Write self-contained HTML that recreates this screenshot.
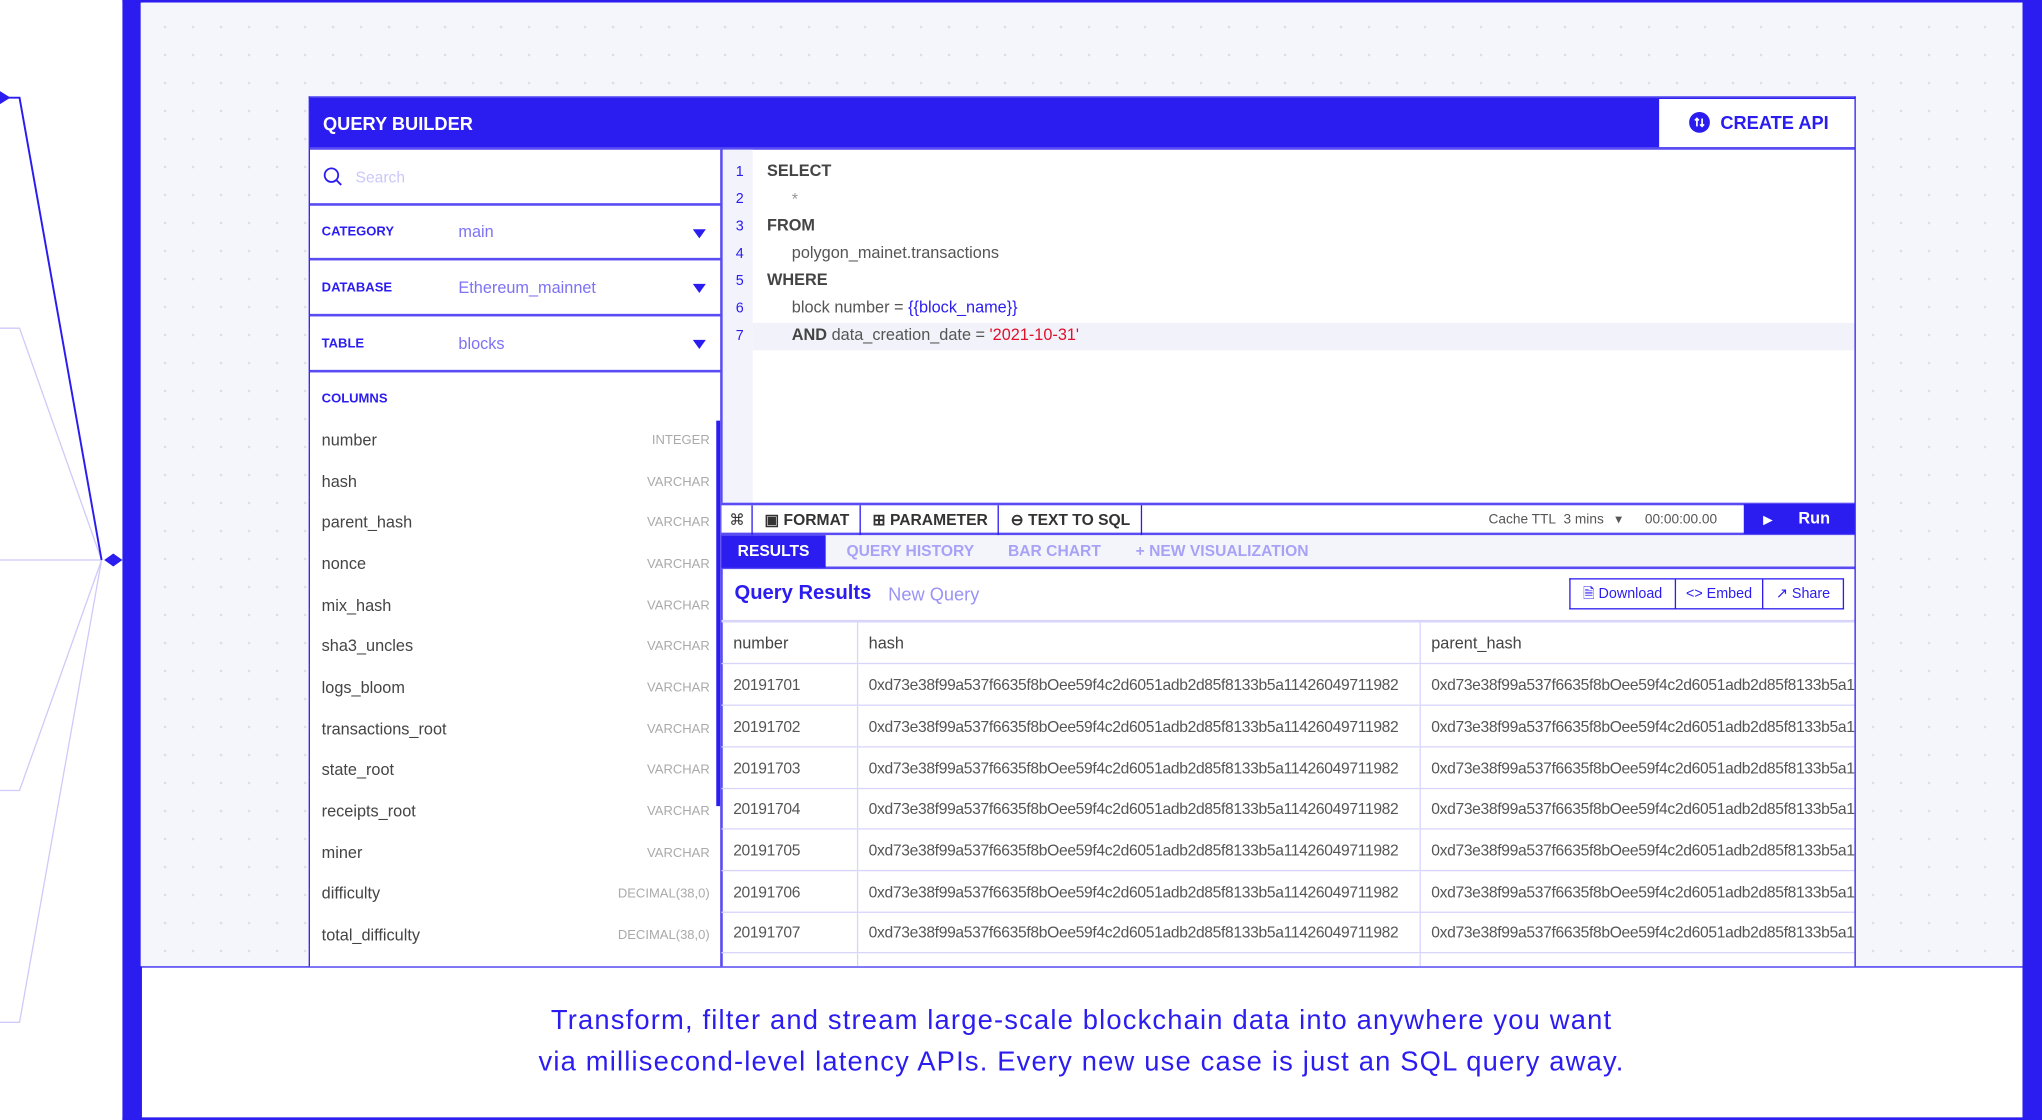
<!DOCTYPE html>
<html><head><meta charset="utf-8"><style>
*{margin:0;padding:0;box-sizing:border-box}
html,body{width:2042px;height:1120px;overflow:hidden;background:#fff;font-family:"Liberation Sans",sans-serif}
#w{position:absolute;left:0;top:0;width:1568px;height:860px;transform:scale(1.30230);transform-origin:0 0}
.a{position:absolute}
.B{color:#2b1cf0}
.bg{position:absolute;left:108px;top:2px;width:1445px;height:740px;background-color:#f5f6fb;background-image:radial-gradient(circle,#dcdde8 0.8px,transparent 1.2px);background-size:21.5px 21.5px;background-position:8px 8px}
.panel{position:absolute;left:237px;top:74px;width:1188px;height:668px;background:#fff;border:1px solid #2b1cf0;border-bottom:none;overflow:hidden}
.row{position:absolute;left:0;width:316px;border-bottom:2px solid #5a4cf3}
.lab{position:absolute;left:9px;font-size:10px;font-weight:bold;color:#2b1cf0}
.val{position:absolute;left:114px;font-size:12.5px;color:#7d72f5}
.tri{position:absolute;left:294px;width:0;height:0;border-left:5.5px solid transparent;border-right:5.5px solid transparent;border-top:7px solid #2b1cf0}
.col{position:absolute;left:9px;width:298px;font-size:12.5px;color:#444}
.col span{position:absolute;right:0;font-size:10px;color:#aaa;top:2px}
.ln{position:absolute;left:324px;width:12px;text-align:center;font-size:11px;color:#2b1cf0}
.cd{position:absolute;left:351px;font-size:12.5px;color:#555}
.tb{position:absolute;top:0;height:23px;border-right:1px solid #2b1cf0;font-size:12px;font-weight:bold;color:#333;line-height:22px;padding-left:9px}
.tab{position:absolute;top:0;height:25px;line-height:25px;font-size:12px;font-weight:bold;color:#a8a2f7}
.btn{position:absolute;top:0;height:23px;border-right:1px solid #2b1cf0;font-size:11px;color:#2b1cf0;line-height:22px;text-align:center}
.tr{position:absolute;left:316px;width:872px;height:32px;border-bottom:1px solid #d8d5fb;font-size:12px;letter-spacing:-0.25px;color:#555;overflow:hidden}
.tr div{position:absolute;top:9px;white-space:nowrap}
.vl{position:absolute;top:0;width:1px;height:32px;background:#d8d5fb}
</style></head><body><div id="w">
<svg class="a" style="left:0;top:0" width="100" height="860">
<g fill="none" stroke="#cfcaf9" stroke-width="1">
<polyline points="0,252 15,252 78,430"/><polyline points="0,430 78,430"/><polyline points="0,607 15,607 78,430"/><polyline points="0,785 15,785 78,430"/>
</g>
<polyline points="0,75 15,75 78,430" fill="none" stroke="#2b1cf0" stroke-width="1.5"/>
<polygon points="0,70 8,75 0,80" fill="#2b1cf0"/>
<polygon points="87,425 94,430 87,435 80,430" fill="#2b1cf0"/>
</svg>
<div class="a" style="left:94px;top:0;width:15px;height:860px;background:#2b1cf0"></div>
<div class="a" style="left:1553px;top:0;width:15px;height:860px;background:#2b1cf0"></div>
<div class="a" style="left:94px;top:0;width:1474px;height:2px;background:#2b1cf0"></div>
<div class="bg"></div>
<div class="a" style="left:108px;top:742px;width:1445px;height:1px;background:#2b1cf0"></div>
<div class="a" style="left:94px;top:858px;width:1474px;height:2px;background:#2b1cf0"></div>
<div class="a B" style="left:108px;top:768px;width:1445px;text-align:center;font-size:21px;letter-spacing:0.9px;line-height:32px">Transform, filter and stream large-scale blockchain data into anywhere you want<br>via millisecond-level latency APIs. Every new use case is just an SQL query away.</div>

<div class="panel">
<div class="a" style="left:0;top:0;width:1188px;height:39px;background:#2b1cf0"></div>
<div class="a" style="left:10px;top:12px;font-size:14px;font-weight:bold;color:#fff">QUERY BUILDER</div>
<div class="a" style="left:1036px;top:1px;width:151px;height:37px;background:#fff"></div>
<svg class="a" style="left:1059px;top:11px" width="16" height="16"><circle cx="8" cy="8" r="8" fill="#2b1cf0"/><path d="M6 11V5M4.5 6.5L6 5 7.5 6.5M10 5v6M8.5 9.5L10 11l1.5-1.5" stroke="#fff" stroke-width="1.3" fill="none"/></svg>
<div class="a B" style="left:1083px;top:11px;font-size:14px;font-weight:bold">CREATE API</div>
<div class="a" style="left:0;top:38px;width:1188px;height:2px;background:#5a4cf3"></div>
<div class="a" style="left:315px;top:39px;width:2px;height:640px;background:#5a4cf3"></div>
<div class="row" style="top:39px;height:44px"></div>
<svg class="a" style="left:10px;top:53px" width="15" height="15"><circle cx="6.5" cy="6.5" r="5.2" stroke="#2b1cf0" stroke-width="1.4" fill="none"/><path d="M10.3 10.3L14 14" stroke="#2b1cf0" stroke-width="1.4"/></svg>
<div class="a" style="left:35px;top:54px;font-size:12px;color:#cbc7fb">Search</div>
<div class="row" style="top:83px;height:42px"></div>
<div class="lab" style="top:98px">CATEGORY</div><div class="val" style="top:96px">main</div><div class="tri" style="top:101px"></div>
<div class="row" style="top:125px;height:43px"></div>
<div class="lab" style="top:141px">DATABASE</div><div class="val" style="top:139px">Ethereum_mainnet</div><div class="tri" style="top:143px"></div>
<div class="row" style="top:168px;height:43px"></div>
<div class="lab" style="top:184px">TABLE</div><div class="val" style="top:182px">blocks</div><div class="tri" style="top:186px"></div>
<div class="lab" style="top:226px">COLUMNS</div>
<div class="a" style="left:312px;top:248px;width:3px;height:296px;background:#2b1cf0"></div>
<div class="col" style="top:256px">number<span>INTEGER</span></div>
<div class="col" style="top:288px">hash<span>VARCHAR</span></div>
<div class="col" style="top:319px">parent_hash<span>VARCHAR</span></div>
<div class="col" style="top:351px">nonce<span>VARCHAR</span></div>
<div class="col" style="top:383px">mix_hash<span>VARCHAR</span></div>
<div class="col" style="top:414px">sha3_uncles<span>VARCHAR</span></div>
<div class="col" style="top:446px">logs_bloom<span>VARCHAR</span></div>
<div class="col" style="top:478px">transactions_root<span>VARCHAR</span></div>
<div class="col" style="top:509px">state_root<span>VARCHAR</span></div>
<div class="col" style="top:541px">receipts_root<span>VARCHAR</span></div>
<div class="col" style="top:573px">miner<span>VARCHAR</span></div>
<div class="col" style="top:604px">difficulty<span>DECIMAL(38,0)</span></div>
<div class="col" style="top:636px">total_difficulty<span>DECIMAL(38,0)</span></div>
<div class="a" style="left:317px;top:40px;width:23px;height:272px;background:#f3f3fb"></div>
<div class="a" style="left:340px;top:173px;width:848px;height:21px;background:#f2f2fa"></div>
<div class="ln" style="top:51px">1</div><div class="ln" style="top:72px">2</div><div class="ln" style="top:93px">3</div><div class="ln" style="top:114px">4</div><div class="ln" style="top:135px">5</div><div class="ln" style="top:156px">6</div><div class="ln" style="top:177px">7</div>
<div class="cd" style="top:49px;font-weight:bold;color:#444">SELECT</div>
<div class="cd" style="top:71px;left:370px;color:#999">*</div>
<div class="cd" style="top:91px;font-weight:bold;color:#444">FROM</div>
<div class="cd" style="top:112px;left:370px">polygon_mainet.transactions</div>
<div class="cd" style="top:133px;font-weight:bold;color:#444">WHERE</div>
<div class="cd" style="top:154px;left:370px">block number = <span style="color:#2b1cf0">{{block_name}}</span></div>
<div class="cd" style="top:175px;left:370px"><b style="color:#444">AND</b> data_creation_date = <span style="color:#e0102a">'2021-10-31'</span></div>
<div class="a" style="left:316px;top:311px;width:872px;height:25px;border-top:2px solid #5a4cf3;border-bottom:2px solid #5a4cf3;background:#fff">
<div class="tb" style="left:0;width:24px;padding-left:6px;font-weight:normal">⌘</div>
<div class="tb" style="left:24px;width:83px">▣ FORMAT</div>
<div class="tb" style="left:107px;width:106px">⊞ PARAMETER</div>
<div class="tb" style="left:213px;width:110px">⊖ TEXT TO SQL</div>
<div class="a" style="left:589px;top:5px;font-size:10.5px;color:#555">Cache TTL&nbsp;&nbsp;3 mins&nbsp;&nbsp;&nbsp;▾&nbsp;&nbsp;&nbsp;&nbsp;&nbsp;&nbsp;00:00:00.00</div>
<div class="a" style="left:785px;top:-1px;width:87px;height:23px;background:#2b1cf0;color:#fff;font-size:12.5px;font-weight:bold;line-height:23px"><span style="margin-left:15px;font-size:9px">▶</span><span style="margin-left:20px">Run</span></div>
</div>
<div class="a" style="left:316px;top:336px;width:872px;height:26px;background:#f4f5fb;border-bottom:2px solid #5a4cf3">
<div class="tab" style="left:0;width:80px;background:#2b1cf0;color:#fff;text-align:center">RESULTS</div>
<div class="tab" style="left:96px">QUERY HISTORY</div>
<div class="tab" style="left:220px">BAR CHART</div>
<div class="tab" style="left:318px">+ NEW VISUALIZATION</div>
</div>
<div class="a B" style="left:326px;top:372px;font-size:15.5px;font-weight:bold">Query Results</div>
<div class="a" style="left:444px;top:373px;font-size:14px;color:#9a93f6">New Query</div>
<div class="a" style="left:967px;top:369px;width:211px;height:24px;border:1px solid #2b1cf0;border-right:none">
<div class="btn" style="left:0;width:81px">🗎 Download</div>
<div class="btn" style="left:81px;width:67px">&lt;&gt; Embed</div>
<div class="btn" style="left:148px;width:62px">↗ Share</div>
</div>
<div class="a" style="left:316px;top:401px;width:872px;height:2px;background:#d8d5fb"></div>
<div class="tr" style="top:403px;font-size:12.5px;letter-spacing:0"><div style="left:9px;color:#444">number</div><div style="left:113px;color:#444">hash</div><div style="left:545px;color:#444">parent_hash</div><i class="vl" style="left:104px"></i><i class="vl" style="left:536px"></i></div>
<div class="tr" style="top:435px"><div style="left:9px">20191701</div><div style="left:113px">0xd73e38f99a537f6635f8bOee59f4c2d6051adb2d85f8133b5a11426049711982</div><div style="left:545px">0xd73e38f99a537f6635f8bOee59f4c2d6051adb2d85f8133b5a11426049711982</div><i class="vl" style="left:104px"></i><i class="vl" style="left:536px"></i></div>
<div class="tr" style="top:467px"><div style="left:9px">20191702</div><div style="left:113px">0xd73e38f99a537f6635f8bOee59f4c2d6051adb2d85f8133b5a11426049711982</div><div style="left:545px">0xd73e38f99a537f6635f8bOee59f4c2d6051adb2d85f8133b5a11426049711982</div><i class="vl" style="left:104px"></i><i class="vl" style="left:536px"></i></div>
<div class="tr" style="top:499px"><div style="left:9px">20191703</div><div style="left:113px">0xd73e38f99a537f6635f8bOee59f4c2d6051adb2d85f8133b5a11426049711982</div><div style="left:545px">0xd73e38f99a537f6635f8bOee59f4c2d6051adb2d85f8133b5a11426049711982</div><i class="vl" style="left:104px"></i><i class="vl" style="left:536px"></i></div>
<div class="tr" style="top:530px"><div style="left:9px">20191704</div><div style="left:113px">0xd73e38f99a537f6635f8bOee59f4c2d6051adb2d85f8133b5a11426049711982</div><div style="left:545px">0xd73e38f99a537f6635f8bOee59f4c2d6051adb2d85f8133b5a11426049711982</div><i class="vl" style="left:104px"></i><i class="vl" style="left:536px"></i></div>
<div class="tr" style="top:562px"><div style="left:9px">20191705</div><div style="left:113px">0xd73e38f99a537f6635f8bOee59f4c2d6051adb2d85f8133b5a11426049711982</div><div style="left:545px">0xd73e38f99a537f6635f8bOee59f4c2d6051adb2d85f8133b5a11426049711982</div><i class="vl" style="left:104px"></i><i class="vl" style="left:536px"></i></div>
<div class="tr" style="top:594px"><div style="left:9px">20191706</div><div style="left:113px">0xd73e38f99a537f6635f8bOee59f4c2d6051adb2d85f8133b5a11426049711982</div><div style="left:545px">0xd73e38f99a537f6635f8bOee59f4c2d6051adb2d85f8133b5a11426049711982</div><i class="vl" style="left:104px"></i><i class="vl" style="left:536px"></i></div>
<div class="tr" style="top:625px"><div style="left:9px">20191707</div><div style="left:113px">0xd73e38f99a537f6635f8bOee59f4c2d6051adb2d85f8133b5a11426049711982</div><div style="left:545px">0xd73e38f99a537f6635f8bOee59f4c2d6051adb2d85f8133b5a11426049711982</div><i class="vl" style="left:104px"></i><i class="vl" style="left:536px"></i></div>
<div class="tr" style="top:657px"><div style="left:9px">20191708</div><div style="left:113px">0xd73e38f99a537f6635f8bOee59f4c2d6051adb2d85f8133b5a11426049711982</div><div style="left:545px">0xd73e38f99a537f6635f8bOee59f4c2d6051adb2d85f8133b5a11426049711982</div><i class="vl" style="left:104px"></i><i class="vl" style="left:536px"></i></div>
</div>
</div></body></html>
